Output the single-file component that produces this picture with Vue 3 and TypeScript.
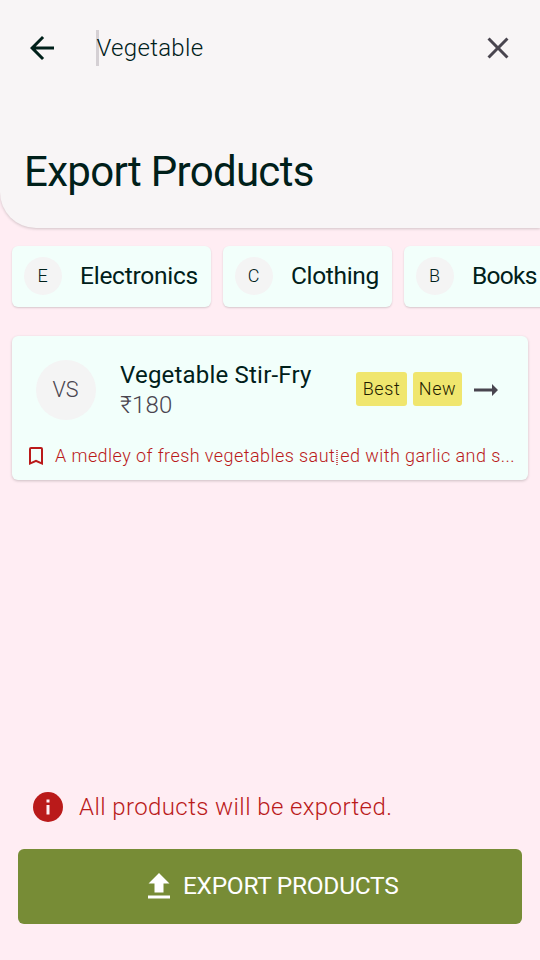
<script setup lang="ts">
import { ref } from 'vue'

interface Category {
  initial: string
  name: string
  width: number
}

const query = ref('Vegetable')
const categories: Category[] = [
  { initial: 'E', name: 'Electronics', width: 199 },
  { initial: 'C', name: 'Clothing', width: 169 },
  { initial: 'B', name: 'Books', width: 150 },
]
const tags: string[] = ['Best', 'New']
</script>

<template>
  <main class="screen">
    <header class="header">
      <div class="search">
        <svg class="back" viewBox="0 0 24 24" aria-label="Back">
          <path d="M20 11H7.83l5.59-5.59L12 4l-8 8 8 8 1.41-1.41L7.83 13H20v-2z" />
        </svg>
        <div class="field"><span class="caret"></span><span class="query">{{ query }}</span></div>
        <svg class="close" viewBox="0 0 24 24" aria-label="Clear">
          <path d="M19 6.41L17.59 5 12 10.59 6.41 5 5 6.41 10.59 12 5 17.59 6.41 19 12 13.41 17.59 19 19 17.59 13.41 12z" />
        </svg>
      </div>
      <h1 class="title">Export Products</h1>
    </header>

    <nav class="chips">
      <div v-for="c in categories" :key="c.name" class="chip" :style="{ width: c.width + 'px' }">
        <span class="chip-avatar">{{ c.initial }}</span>
        <span class="chip-name" :class="c.name.toLowerCase()">{{ c.name }}</span>
      </div>
    </nav>

    <article class="card">
      <div class="product">
        <div class="avatar">VS</div>
        <div class="info">
          <div class="name">Vegetable Stir-Fry</div>
          <div class="price">₹180</div>
        </div>
        <div class="tags">
          <span v-for="t in tags" :key="t" class="tag" :class="t.toLowerCase()">{{ t }}</span>
        </div>
        <svg class="go" viewBox="0 0 24 12"><path d="M0 4.6h18V0l6 6-6 6V7.4H0z" /></svg>
      </div>
      <div class="description">
        <svg class="bookmark" viewBox="0 0 14 18">
          <path d="M0 18V2Q0 0 2 0H12Q14 0 14 2V18L7 15ZM2 15L7 12.8 12 15V2H2Z" />
        </svg>
        <p class="blurb">A medley of fresh vegetables saut<span class="unknown"></span>ed with garlic and s...</p>
      </div>
    </article>

    <footer class="footer">
      <div class="notice">
        <svg class="notice-icon" viewBox="0 0 30 30">
          <circle cx="15" cy="15" r="15" />
          <path class="mark" d="M13.5 7.5h3v3h-3zM13.5 13h3v9.5h-3z" />
        </svg>
        <span class="notice-text">All products will be exported.</span>
      </div>
      <button class="export" type="button">
        <svg class="upload" viewBox="0 0 22 26">
          <path d="M6.5 19.5V10.5H.5L11 0 21.5 10.5h-6v9zM0 22.5h22v3H0z" />
        </svg>
        <span class="export-text">EXPORT PRODUCTS</span>
      </button>
    </footer>
  </main>
</template>

<style>
body {
  overflow: hidden;
}
</style>

<style scoped>
.screen {
  display: flex;
  flex-direction: column;
  width: 540px;
  height: 960px;
  overflow: hidden;
  background: #ffedf3;
  color: #00201a;
  font-family: Roboto, "Liberation Sans", sans-serif;
  white-space: nowrap;
}
.header {
  flex: none;
  box-sizing: border-box;
  height: 228px;
  background: #f8f5f6;
  border-bottom-left-radius: 36px;
  box-shadow: 0 1px 3px rgba(0, 0, 0, 0.18);
}
.search {
  display: flex;
  align-items: center;
  height: 96px;
  padding: 0 24px;
}
.back {
  width: 36px;
  height: 36px;
  fill: #00201a;
}
.field {
  display: flex;
  flex: 1;
  align-items: center;
  margin-left: 36px;
  font-size: 24px;
  font-weight: 300;
  letter-spacing: 0.3px;
}
.caret {
  width: 3px;
  height: 36px;
  margin-right: -2.5px;
  background: #d5d0d4;
}
.query {
  position: relative;
}
.close {
  width: 36px;
  height: 36px;
  fill: #49454f;
}
.title {
  margin: 48px 0 0 24px;
  font-size: 42px;
  font-weight: 400;
  line-height: 56px;
  letter-spacing: -0.7px;
}
.chips {
  display: flex;
  flex: none;
  gap: 12px;
  padding: 17.5px 0 0 12px;
}
.chip {
  display: flex;
  flex: none;
  align-items: center;
  gap: 18px;
  box-sizing: border-box;
  height: 61.5px;
  padding-left: 12px;
  border-radius: 6px;
  background: #f2fffb;
  box-shadow: 0 1px 2px rgba(0, 0, 0, 0.16);
}
.chip-avatar {
  display: grid;
  flex: none;
  place-items: center;
  box-sizing: border-box;
  width: 38px;
  height: 38px;
  padding: 0 1px 2px 0;
  border-radius: 50%;
  background: #f4f4f4;
  font-size: 18px;
  font-weight: 300;
}
.chip-name {
  padding-bottom: 2px;
  font-size: 24.5px;
  letter-spacing: -0.25px;
}
.chip-name.clothing {
  letter-spacing: -0.35px;
}
.chip-name.books {
  letter-spacing: -0.7px;
}
.card {
  flex: none;
  box-sizing: border-box;
  height: 144px;
  margin: 29px 12px 0;
  border-radius: 6px;
  background: #f2fffb;
  box-shadow: 0 1px 3px rgba(0, 0, 0, 0.2);
}
.product {
  display: flex;
  align-items: center;
  height: 108px;
  padding: 0 30px 0 24px;
}
.avatar {
  display: grid;
  flex: none;
  place-items: center;
  box-sizing: border-box;
  width: 60px;
  height: 60px;
  padding: 0 1px 2px 0;
  border-radius: 50%;
  background: #f4f4f4;
  color: #49454f;
  font-size: 21.5px;
  font-weight: 300;
}
.info {
  flex: 1;
  margin-left: 24px;
}
.name {
  font-size: 24px;
  line-height: 30px;
  letter-spacing: 0.2px;
}
.price {
  color: #49454f;
  font-size: 24px;
  font-weight: 300;
  line-height: 30px;
  letter-spacing: 0.2px;
}
.tags {
  display: flex;
  gap: 6px;
  margin-bottom: 2px;
}
.tag {
  display: grid;
  place-items: center;
  box-sizing: border-box;
  height: 34px;
  padding-bottom: 1px;
  border-radius: 3px;
  background: #f0e66e;
  color: #1f1c00;
  font-size: 18px;
  font-weight: 300;
  letter-spacing: 0.6px;
}
.tag.best {
  width: 51px;
}
.tag.new {
  width: 49px;
}
.go {
  width: 24px;
  height: 12px;
  margin-left: 12px;
  fill: #49454f;
}
.description {
  display: flex;
  align-items: center;
  height: 24px;
  padding-left: 17px;
  color: #ba1a1a;
}
.bookmark {
  flex: none;
  width: 14px;
  height: 18px;
  fill: #ba1a1a;
}
.blurb {
  margin: 0 0 2px 12px;
  font-size: 18px;
  font-weight: 300;
  letter-spacing: 0.43px;
}
.unknown {
  display: inline-block;
  width: 2px;
  height: 15px;
  margin: 0 2px 0 1px;
  background: repeating-linear-gradient(#ba1a1a 0 1px, transparent 1px 2px);
  opacity: 0.7;
  vertical-align: -3px;
}
.footer {
  margin-top: auto;
  padding: 0 18px 36px;
}
.notice {
  display: flex;
  align-items: center;
  gap: 16px;
  height: 30px;
  padding-left: 15px;
  margin-bottom: 27px;
  color: #ba1a1a;
  font-size: 24px;
  font-weight: 300;
  letter-spacing: 0.4px;
}
.notice-icon {
  width: 30px;
  height: 30px;
  fill: #ba1a1a;
}
.mark {
  fill: #ffedf3;
}
.export {
  display: flex;
  align-items: center;
  justify-content: flex-start;
  gap: 13px;
  box-sizing: border-box;
  width: 100%;
  height: 75px;
  padding: 0 0 2px 130px;
  border: 0;
  border-radius: 6px;
  background: #778c36;
  color: #fff;
  font-family: inherit;
  font-size: 24.5px;
  letter-spacing: -0.3px;
}
.upload {
  width: 22px;
  height: 26px;
  fill: #fff;
}
</style>
